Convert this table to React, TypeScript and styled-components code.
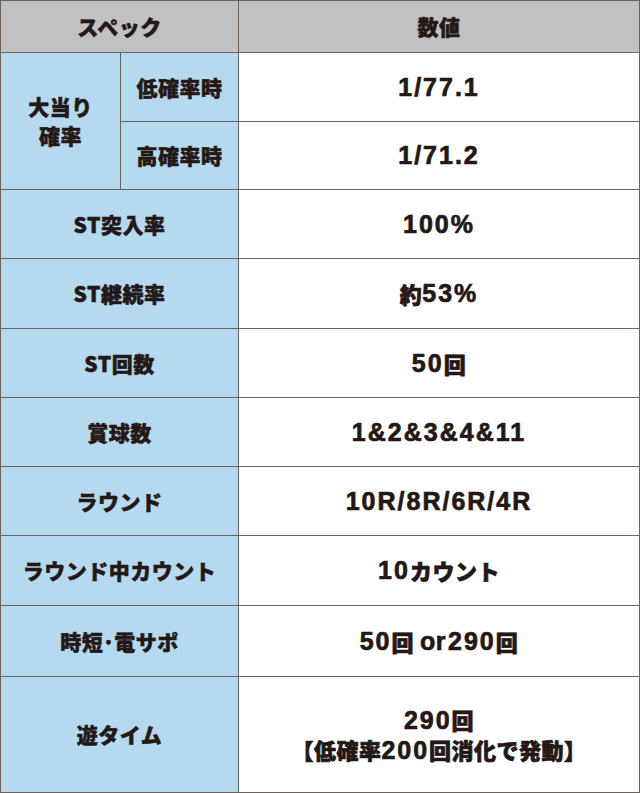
import React from 'react';
import styled, { createGlobalStyle } from 'styled-components';

const GlobalStyle = createGlobalStyle`
  html, body {
    margin: 0;
    padding: 0;
    background: #ffffff;
  }
  body {
    font-family: 'Liberation Sans', 'Noto Sans CJK JP', sans-serif;
    color: #231815;
  }
`;

type Row = {
  label: string;
  value: React.ReactNode;
  height: number;
};

const SpecGrid = styled.div`
  display: grid;
  width: 640px;
  box-sizing: border-box;
  grid-template-columns: 119px 117px 400px;
  gap: 1px;
  padding: 1px;
  background: #6b625e;
`;

const Cell = styled.div<{ $tone: 'head' | 'label' | 'value'; $span?: number; $rows?: number }>`
  display: flex;
  align-items: center;
  justify-content: center;
  text-align: center;
  font-weight: 700;
  font-size: ${(p) => (p.$tone === 'value' ? '25px' : '21px')};
  letter-spacing: ${(p) => (p.$tone === 'value' ? '2px' : '0.8px')};
  line-height: 29px;
  -webkit-text-stroke: ${(p) => (p.$tone === 'value' ? '0.7px' : '0.5px')} #231815;
  background: ${(p) =>
    p.$tone === 'head' ? '#c0c1c0' : p.$tone === 'label' ? '#b5daf0' : '#ffffff'};
  grid-column: ${(p) => (p.$span ? `span ${p.$span}` : 'auto')};
  grid-row: ${(p) => (p.$rows ? `span ${p.$rows}` : 'auto')};
`;

const Jp = styled.span<{ $small?: boolean }>`
  font-family: 'Noto Sans CJK JP', sans-serif;
  font-weight: 900;
  font-size: ${(p) => (p.$small ? '22px' : 'inherit')};
  letter-spacing: 0.5px;
`;

const Or = styled.span`
  margin: 0 2px 0 6px;
  letter-spacing: 0.5px;
`;

const Stack = styled.div`
  display: flex;
  flex-direction: column;
  align-items: center;
  line-height: 29px;
`;

const rows: Row[] = [
  { label: 'ST突入率', value: <>100%</>, height: 68 },
  { label: 'ST継続率', value: <><Jp $small>約</Jp>53%</>, height: 69 },
  { label: 'ST回数', value: <>50<Jp $small>回</Jp></>, height: 68 },
  { label: '賞球数', value: <>1&amp;2&amp;3&amp;4&amp;11</>, height: 68 },
  { label: 'ラウンド', value: <>10R/8R/6R/4R</>, height: 68 },
  { label: 'ラウンド中カウント', value: <>10<Jp $small>カウント</Jp></>, height: 69 },
  {
    label: '時短･電サポ',
    value: <>50<Jp $small>回</Jp><Or>or</Or>290<Jp $small>回</Jp></>,
    height: 70,
  },
  {
    label: '遊タイム',
    value: (
      <Stack>
        <span>290<Jp $small>回</Jp></span>
        <span><Jp $small>【低確率</Jp>200<Jp $small>回消化で発動】</Jp></span>
      </Stack>
    ),
    height: 115,
  },
];

const App = () => {
  const template = [51, 68, 67, ...rows.map((r) => r.height)].map((h) => `${h}px`).join(' ');
  return (
    <>
      <GlobalStyle />
      <SpecGrid style={{ gridTemplateRows: template }}>
        <Cell $tone="head" $span={2}><Jp>スペック</Jp></Cell>
        <Cell $tone="head"><Jp>数値</Jp></Cell>

        <Cell $tone="label" $rows={2}>
          <Stack><Jp>大当り</Jp><Jp>確率</Jp></Stack>
        </Cell>
        <Cell $tone="label"><Jp>低確率時</Jp></Cell>
        <Cell $tone="value">1/77.1</Cell>
        <Cell $tone="label"><Jp>高確率時</Jp></Cell>
        <Cell $tone="value">1/71.2</Cell>

        {rows.map((r) => (
          <React.Fragment key={r.label}>
            <Cell $tone="label" $span={2}><Jp>{r.label}</Jp></Cell>
            <Cell $tone="value">{r.value}</Cell>
          </React.Fragment>
        ))}
      </SpecGrid>
    </>
  );
};

export default App;
